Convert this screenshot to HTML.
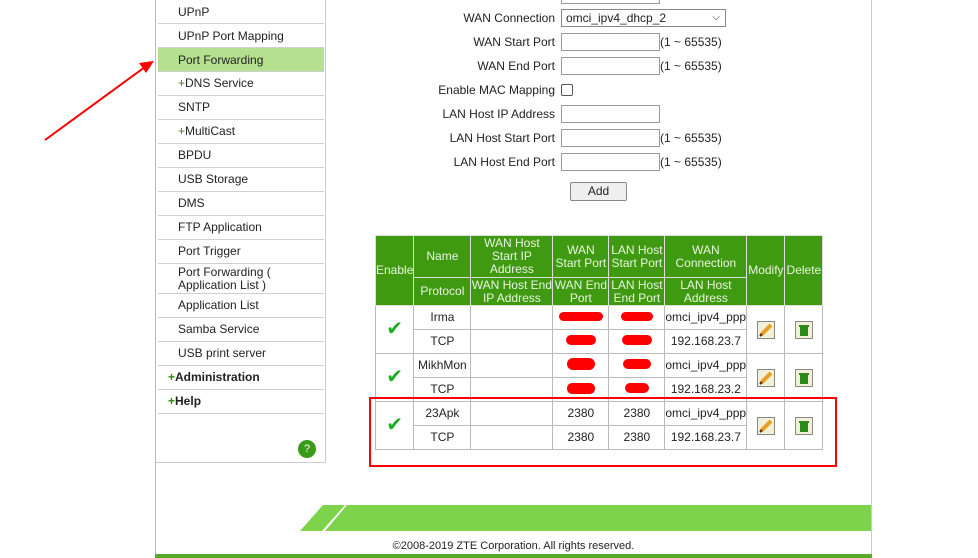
<!DOCTYPE html>
<html><head><meta charset="utf-8"><style>
*{margin:0;padding:0;box-sizing:border-box}
body{width:978px;height:558px;position:relative;background:#fff;font-family:"Liberation Sans","DejaVu Sans",sans-serif;font-size:12px;color:#222;overflow:hidden}
.a{position:absolute}
.side{left:156px;top:0;width:170px;height:463px;border-right:1px solid #ccc;border-bottom:1px solid #ccc}
.it{position:absolute;left:2px;width:166px;border-bottom:1px solid #d0d0d0;padding-left:20px;line-height:23px}
.it b{font-weight:bold}
.pl{color:#2a8a10}
.lbl{position:absolute;text-align:right;width:200px;left:355px}
.inp{position:absolute;left:561px;width:99px;height:18px;border:1px solid #999;background:#fff}
.rng{position:absolute;left:660px}
table{position:absolute;left:375px;top:235px;border-collapse:collapse;table-layout:fixed}
td{border:1px solid #bbb;text-align:center;font-size:12px;line-height:13px;padding:0;overflow:hidden;white-space:nowrap}
th{background:#3f9a12;color:#e8f5dd;border:1px solid #ddd;font-weight:normal;font-size:12px;line-height:13px;padding:0}
.ck{color:#1fae1f;font-size:20px;font-weight:bold}
.ico{display:inline-block;width:18px;height:18px;border:1px solid #888;background:#f3f0d8;vertical-align:middle;position:relative}
</style></head><body>
<div class="a" style="left:155px;top:0;width:1px;height:558px;background:#bbb"></div>
<div class="a" style="left:871px;top:0;width:1px;height:558px;background:#ccc"></div>
<div class="a side">
<div class="it" style="top:0;height:24px;line-height:24px">UPnP</div>
<div class="it" style="top:24px;height:24px;line-height:24px">UPnP Port Mapping</div>
<div class="it" style="top:48px;height:24px;line-height:24px;background:#b5e08f">Port Forwarding</div>
<div class="it" style="top:72px;height:24px"><span class="pl">+</span>DNS Service</div>
<div class="it" style="top:96px;height:24px">SNTP</div>
<div class="it" style="top:120px;height:24px"><span class="pl">+</span>MultiCast</div>
<div class="it" style="top:144px;height:24px">BPDU</div>
<div class="it" style="top:168px;height:24px">USB Storage</div>
<div class="it" style="top:192px;height:24px">DMS</div>
<div class="it" style="top:216px;height:24px">FTP Application</div>
<div class="it" style="top:240px;height:24px">Port Trigger</div>
<div class="it" style="top:264px;height:30px;line-height:13px;padding-top:2px">Port Forwarding (<br>Application List )</div>
<div class="it" style="top:294px;height:24px">Application List</div>
<div class="it" style="top:318px;height:24px">Samba Service</div>
<div class="it" style="top:342px;height:24px">USB print server</div>
<div class="it" style="top:366px;height:24px;padding-left:10px"><b><span class="pl">+</span>Administration</b></div>
<div class="it" style="top:390px;height:24px;padding-left:10px"><b><span class="pl">+</span>Help</b></div>
<div class="a" style="left:142px;top:440px;width:18px;height:18px;border-radius:50%;background:#3a9a1a;color:#fff;text-align:center;line-height:18px;font-size:11px">?</div>
</div>
<svg class="a" style="left:0;top:0" width="200" height="200"><line x1="45" y1="140" x2="145" y2="67" stroke="#f00" stroke-width="2"/><polygon points="154,61 139,63 146,73" fill="#f00"/></svg>

<div class="inp" style="top:-8px;height:12px"></div>
<div class="lbl" style="top:11px">WAN Connection</div>
<div class="a" style="left:561px;top:9px;width:165px;height:18px;border:1px solid #888;padding-left:4px;line-height:16px">omci_ipv4_dhcp_2<span style="position:absolute;right:5px;font-size:10px">&#9013;</span></div>
<div class="lbl" style="top:35px">WAN Start Port</div><div class="inp" style="top:33px"></div><div class="rng" style="top:35px">(1 ~ 65535)</div>
<div class="lbl" style="top:59px">WAN End Port</div><div class="inp" style="top:57px"></div><div class="rng" style="top:59px">(1 ~ 65535)</div>
<div class="lbl" style="top:83px">Enable MAC Mapping</div><div class="a" style="left:561px;top:84px;width:12px;height:12px;border:1px solid #555;border-radius:2px"></div>
<div class="lbl" style="top:107px">LAN Host IP Address</div><div class="inp" style="top:105px"></div>
<div class="lbl" style="top:131px">LAN Host Start Port</div><div class="inp" style="top:129px"></div><div class="rng" style="top:131px">(1 ~ 65535)</div>
<div class="lbl" style="top:155px">LAN Host End Port</div><div class="inp" style="top:153px"></div><div class="rng" style="top:155px">(1 ~ 65535)</div>
<div class="a" style="left:570px;top:182px;width:57px;height:19px;border:1px solid #888;border-radius:2px;background:#efefef;text-align:center;line-height:17px">Add</div>

<table>
<colgroup><col style="width:38px"><col style="width:57px"><col style="width:82px"><col style="width:56px"><col style="width:56px"><col style="width:82px"><col style="width:38px"><col style="width:38px"></colgroup>
<tr style="height:42px"><th rowspan="2">Enable</th><th>Name</th><th>WAN Host<br>Start IP<br>Address</th><th>WAN<br>Start Port</th><th>LAN Host<br>Start Port</th><th>WAN<br>Connection</th><th rowspan="2">Modify</th><th rowspan="2">Delete</th></tr>
<tr style="height:28px"><th>Protocol</th><th>WAN Host End<br>IP Address</th><th>WAN End<br>Port</th><th>LAN Host<br>End Port</th><th>LAN Host<br>Address</th></tr>
<tr style="height:24px"><td rowspan="2" class="ck">&#10004;</td><td>Irma</td><td></td><td><span style="display:inline-block;width:44px;height:9px;background:#f00;border-radius:5px"></span></td><td><span style="display:inline-block;width:32px;height:9px;background:#f00;border-radius:5px"></span></td><td style="text-align:left">omci_ipv4_ppp</td><td rowspan="2"><span class="ico"><svg width="16" height="16"><line x1="3" y1="13" x2="13" y2="3" stroke="#e8a020" stroke-width="4"/><line x1="2" y1="14" x2="4" y2="12" stroke="#333" stroke-width="2"/></svg></span></td><td rowspan="2"><span class="ico"><svg width="16" height="16"><rect x="4" y="5" width="8" height="9" fill="#2a8a1a"/><rect x="3" y="3" width="10" height="2" fill="#2a8a1a"/></svg></span></td></tr>
<tr style="height:24px"><td>TCP</td><td></td><td><span style="display:inline-block;width:30px;height:10px;background:#f00;border-radius:5px"></span></td><td><span style="display:inline-block;width:30px;height:10px;background:#f00;border-radius:5px"></span></td><td>192.168.23.7</td></tr>
<tr style="height:24px"><td rowspan="2" class="ck">&#10004;</td><td>MikhMon</td><td></td><td><span style="display:inline-block;width:28px;height:12px;background:#f00;border-radius:6px"></span></td><td><span style="display:inline-block;width:28px;height:10px;background:#f00;border-radius:5px"></span></td><td style="text-align:left">omci_ipv4_ppp</td><td rowspan="2"><span class="ico"><svg width="16" height="16"><line x1="3" y1="13" x2="13" y2="3" stroke="#e8a020" stroke-width="4"/><line x1="2" y1="14" x2="4" y2="12" stroke="#333" stroke-width="2"/></svg></span></td><td rowspan="2"><span class="ico"><svg width="16" height="16"><rect x="4" y="5" width="8" height="9" fill="#2a8a1a"/><rect x="3" y="3" width="10" height="2" fill="#2a8a1a"/></svg></span></td></tr>
<tr style="height:24px"><td>TCP</td><td></td><td><span style="display:inline-block;width:28px;height:11px;background:#f00;border-radius:5px"></span></td><td><span style="display:inline-block;width:24px;height:10px;background:#f00;border-radius:5px"></span></td><td>192.168.23.2</td></tr>
<tr style="height:24px"><td rowspan="2" class="ck">&#10004;</td><td>23Apk</td><td></td><td>2380</td><td>2380</td><td style="text-align:left">omci_ipv4_ppp</td><td rowspan="2"><span class="ico"><svg width="16" height="16"><line x1="3" y1="13" x2="13" y2="3" stroke="#e8a020" stroke-width="4"/><line x1="2" y1="14" x2="4" y2="12" stroke="#333" stroke-width="2"/></svg></span></td><td rowspan="2"><span class="ico"><svg width="16" height="16"><rect x="4" y="5" width="8" height="9" fill="#2a8a1a"/><rect x="3" y="3" width="10" height="2" fill="#2a8a1a"/></svg></span></td></tr>
<tr style="height:24px"><td>TCP</td><td></td><td>2380</td><td>2380</td><td>192.168.23.7</td></tr>
</table>
<div class="a" style="left:369px;top:397px;width:468px;height:70px;border:2px solid #f00"></div>

<svg class="a" style="left:295px;top:505px" width="576" height="27"><polygon points="28,0 50,0 27,26 5,26" fill="#7dd34a"/><polygon points="52,0 576,0 576,26 30,26" fill="#7dd34a"/></svg>
<div class="a" style="left:155px;width:717px;top:540px;text-align:center;font-size:11px;color:#222">©2008-2019 ZTE Corporation. All rights reserved.</div>
<div class="a" style="left:155px;top:554px;width:717px;height:4px;background:#5aaa2a"></div>
</body></html>
